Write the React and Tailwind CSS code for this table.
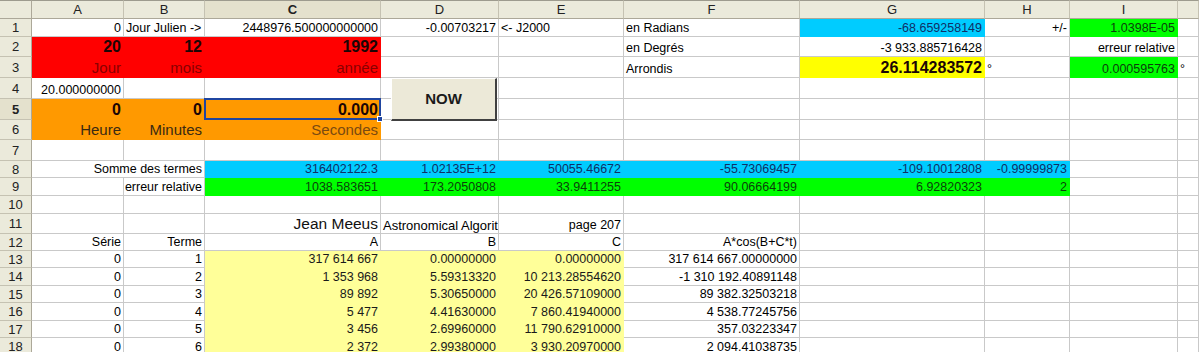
import React from "react";

const HEADS = ["A", "B", "C", "D", "E", "F", "G", "H", "I", ""];

const FILL = {
  red: "bg-[#ff0000] border-[#ff0000]",
  org: "bg-[#ff9900] border-[#ff9900]",
  blu: "bg-[#00ccff] border-[#00ccff] text-[#0f2f66]",
  grn: "bg-[#00ff00] border-[#00ff00] text-[#0b3f0b]",
  yel: "bg-[#ffff00] border-[#ffff00]",
  lyl: "bg-[#ffff99] border-[#ffff99] text-[#1a1a1a]",
};

const KIND = {
  big: "text-[16px] font-bold leading-[18px] text-[#1a0505]",
  redlbl: "text-[15px] leading-[18px] text-[#8a0000]",
  orglbl: "text-[15px] leading-[18px] text-[#3a2a12]",
  orglbl2: "text-[15px] leading-[18px] text-[#7a4a10]",
  jm: "text-[15.5px] leading-[18px] text-[#111]",
  astro: "text-[13px] leading-[15px]",
};

const E = {};

const rows = [
  [
    { t: "0" },
    { t: "Jour Julien ->", l: 1 },
    { t: "2448976.500000000000" },
    { t: "-0.00703217" },
    { t: "<- J2000", l: 1 },
    { t: "en Radians", l: 1 },
    { t: "-68.659258149", f: "blu" },
    { t: "+/-" },
    { t: "1.0398E-05", f: "grn" },
    E,
  ],
  [
    { t: "20", f: "red", k: "big" },
    { t: "12", f: "red", k: "big" },
    { t: "1992", f: "red", k: "big" },
    E,
    E,
    { t: "en Degrés", l: 1 },
    { t: "-3 933.885716428" },
    E,
    { t: "erreur relative" },
    E,
  ],
  [
    { t: "Jour", f: "red", k: "redlbl" },
    { t: "mois", f: "red", k: "redlbl" },
    { t: "année", f: "red", k: "redlbl" },
    E,
    E,
    { t: "Arrondis", l: 1 },
    { t: "26.114283572", f: "yel", k: "big" },
    { t: "°", l: 1 },
    { t: "0.000595763", f: "grn" },
    { t: "°", l: 1 },
  ],
  [{ t: "20.000000000" }, E, E, E, E, E, E, E, E, E],
  [
    { t: "0", f: "org", k: "big" },
    { t: "0", f: "org", k: "big" },
    { t: "0.000", f: "org", k: "big", sel: 1 },
    E,
    E,
    E,
    E,
    E,
    E,
    E,
  ],
  [
    { t: "Heure", f: "org", k: "orglbl" },
    { t: "Minutes", f: "org", k: "orglbl" },
    { t: "Secondes", f: "org", k: "orglbl2" },
    E,
    E,
    E,
    E,
    E,
    E,
    E,
  ],
  [E, E, E, E, E, E, E, E, E, E],
  [
    { t: "Somme des termes", span: 2 },
    { t: "316402122.3", f: "blu" },
    { t: "1.02135E+12", f: "blu" },
    { t: "50055.46672", f: "blu" },
    { t: "-55.73069457", f: "blu" },
    { t: "-109.10012808", f: "blu" },
    { t: "-0.99999873", f: "blu" },
    E,
    E,
  ],
  [
    E,
    { t: "erreur relative" },
    { t: "1038.583651", f: "grn" },
    { t: "173.2050808", f: "grn" },
    { t: "33.9411255", f: "grn" },
    { t: "90.06664199", f: "grn" },
    { t: "6.92820323", f: "grn" },
    { t: "2", f: "grn" },
    E,
    E,
  ],
  [E, E, E, E, E, E, E, E, E, E],
  [
    E,
    E,
    { t: "Jean Meeus", k: "jm" },
    { t: "Astronomical Algorithms", l: 1, k: "astro" },
    { t: "page 207" },
    E,
    E,
    E,
    E,
    E,
  ],
  [
    { t: "Série" },
    { t: "Terme" },
    { t: "A" },
    { t: "B" },
    { t: "C" },
    { t: "A*cos(B+C*t)" },
    E,
    E,
    E,
    E,
  ],
];

const terms = [
  ["1", "317 614 667", "0.00000000", "0.00000000", "317 614 667.00000000"],
  ["2", "1 353 968", "5.59313320", "10 213.28554620", "-1 310 192.40891148"],
  ["3", "89 892", "5.30650000", "20 426.57109000", "89 382.32503218"],
  ["4", "5 477", "4.41630000", "7 860.41940000", "4 538.77245756"],
  ["5", "3 456", "2.69960000", "11 790.62910000", "357.03223347"],
  ["6", "2 372", "2.99380000", "3 930.20970000", "2 094.41038735"],
];

terms.forEach(([n, a, b, c, v]) => {
  rows.push([
    { t: "0" },
    { t: n },
    { t: a, f: "lyl" },
    { t: b, f: "lyl" },
    { t: c, f: "lyl" },
    { t: v },
    E,
    E,
    E,
    E,
  ]);
});

function Cell({ cell }) {
  const fill = cell.f ? FILL[cell.f] : "bg-white border-[#c9c9c9]";
  const kind = cell.k ? KIND[cell.k] : "text-[12.5px] leading-[15px]";
  return (
    <div
      className={`relative flex items-end whitespace-nowrap border-r border-b px-[2px] ${
        cell.sel ? "z-10 overflow-visible" : "overflow-hidden"
      } ${cell.span === 2 ? "col-span-2" : ""} ${
        cell.l ? "justify-start" : "justify-end"
      } ${fill} ${kind}`}
    >
      <span>{cell.t}</span>
      {cell.sel && (
        <>
          <div className="absolute -top-[1px] -left-[1px] -right-[1px] -bottom-[1px] border-2 border-[#1f45a0]" />
          <div className="absolute -right-[3px] -bottom-[3px] h-[6px] w-[6px] border border-white bg-[#1f45a0]" />
        </>
      )}
    </div>
  );
}

export default function App() {
  return (
    <div className="relative h-[352px] w-[1199px] overflow-hidden bg-white font-['Liberation_Sans',Arial,sans-serif] text-black">
      <div className="grid grid-cols-[32px_92px_81px_176px_118px_125px_176px_185px_85px_108px_1fr] grid-rows-[19px_18px_20px_21px_21px_21px_20px_21px_17px_18px_18px_20px_17px_17px_18px_17px_18px_17px_18px]">
        <div className="border-r border-b border-r-[#aca899] border-b-[#aca899] border-t border-t-[#9d9b8e] bg-[#ebeadb]" />
        {HEADS.map((h, i) => (
          <div
            key={i}
            className={`flex items-center justify-center border-t border-t-[#9d9b8e] border-r border-b border-r-[#c5c2b2] border-b-[#aca899] text-[13px] leading-none text-[#222] ${
              h === "C" ? "bg-[#e4e1cd] font-bold" : "bg-[#ebeadb]"
            }`}
          >
            {h}
          </div>
        ))}
        {rows.map((row, r) => (
          <React.Fragment key={r}>
            <div
              className={`flex items-center justify-center border-r border-b border-r-[#aca899] border-b-[#c5c2b2] text-[13px] leading-none text-[#222] ${
                r === 4 ? "bg-[#e4e1cd] font-bold" : "bg-[#ebeadb]"
              }`}
            >
              {r + 1}
            </div>
            {row.map((cell, c) => (
              <Cell key={c} cell={cell} />
            ))}
          </React.Fragment>
        ))}
      </div>

      <button className="absolute top-[78px] left-[391px] z-20 flex h-[43px] w-[106px] items-center justify-center border-t border-l border-t-white border-l-white border-r-2 border-b-2 border-r-[#404040] border-b-[#404040] bg-[#ece9d8] text-[15px] font-bold text-[#1a1a1a]">
        NOW
      </button>
    </div>
  );
}
